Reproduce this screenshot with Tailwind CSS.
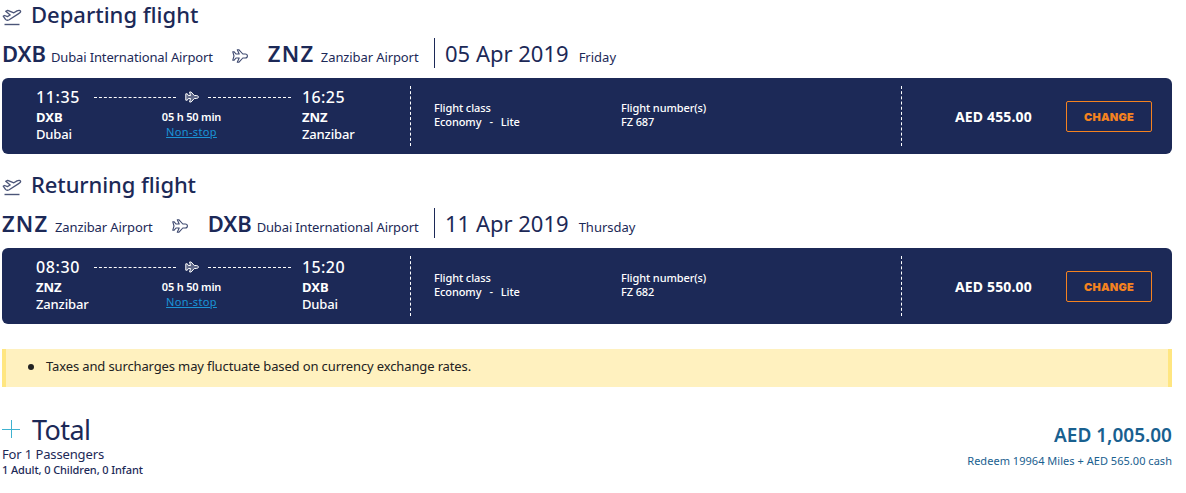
<!DOCTYPE html>
<html lang="en">
<head>
    <meta charset="UTF-8" />
    <meta name="viewport" content="width=device-width, initial-scale=1.0" />
    <title>Your flights</title>

    <script src="https://cdn.jsdelivr.net/npm/@tailwindcss/browser@4"></script>

    <style>
        body {
            font-family: 'Noto Sans', sans-serif;
        }
    </style>
</head>
<body class="bg-white text-[#1c2957]">

<!-- Shared icons -->
<svg class="hidden">
    <symbol id="plane" viewBox="0 0 16 14">
        <path d="M.8 2.800h1.400L4 5h3.200L5.300.7h1.500L10.800 5h2.400c1.300 0 2.200 1 2.200 2s-.9 2-2.200 2h-2.400l-4 4.300H5.300L7.200 9H4l-1.800 2.200H.8L2 7z" fill="none" stroke="currentColor" stroke-width="1.100" stroke-linejoin="round" />
    </symbol>
    <symbol id="jet" viewBox="0 0 14 12">
        <path d="M.8 2.800h1.500l1 1.700h2.200L4.600 1h1.500l3.200 3.500h2.200c1 0 1.900.7 1.900 1.500s-.9 1.500-1.900 1.500H9.300L6.100 11H4.600l.9-3.500H3.300l-1 1.700H.8z" fill="currentColor" fill-opacity=".3" stroke="currentColor" stroke-linejoin="round" />
    </symbol>
    <symbol id="takeoff" viewBox="0 0 20 18">
        <path d="M1.200 8.200l1.500-.7 2.700 1.100 2.800-1.600L3.700 3.300l2-1 6.200 2.500 3.100-1.900c1.500-.9 3.100-.7 3.500.1.400.8-.4 1.800-1.800 2.600L7.200 11.700c-1.500.8-2.800.8-3.700-.3z" fill="none" stroke="currentColor" stroke-width="1.300" stroke-linejoin="round" />
        <path d="M2.500 16.500h15" stroke="currentColor" stroke-width="1.400" />
    </symbol>
</svg>

<main class="ml-0.5 w-[1170px]">

    <!-- Departing flight -->
    <section>
        <h2 class="flex h-[29px] text-[22px] leading-[29px] font-medium">
            <svg class="mt-2 mr-[9px] h-[18px] w-5 text-[#4b5578]"><use href="#takeoff" /></svg>
            <span>Departing flight</span>
        </h2>
        <div class="mt-[9px] flex h-[30px] items-baseline text-[22px] leading-[30px]">
            <div class="flex w-[432px] items-baseline">
                <span class="w-[49px] font-semibold tracking-[-0.1px]">DXB</span>
                <span class="text-[13px] tracking-[-0.14px]">Dubai International Airport</span>
                <svg class="mt-0.5 ml-[19px] h-3.5 w-4 self-center text-[#3d486f]"><use href="#plane" /></svg>
                <span class="ml-5 w-[53px] font-semibold tracking-[1.2px]">ZNZ</span>
                <span class="text-[13px] tracking-[-0.1px]">Zanzibar Airport</span>
            </div>
            <div class="flex h-[30px] items-baseline border-l border-[#1c2957] pl-2.5">
                <span>05 Apr 2019</span>
                <span class="ml-2.5 text-[13px]">Friday</span>
            </div>
        </div>
        <div class="mt-2.5 flex h-[76px] rounded-md bg-[#1c2957] pl-[34px] text-white">
            <div class="w-[58px] pt-2.5 text-[13px] leading-[17px] font-medium">
                <p class="mb-[3px] text-base leading-[18px] tracking-[0.6px]">11:35</p>
                <p class="font-bold">DXB</p>
                <p class="tracking-[-0.15px]">Dubai</p>
            </div>
            <div class="w-[208px] pt-[13px] text-center">
                <div class="flex h-3 items-center">
                    <span class="w-[82px] border-t border-dashed border-white"></span>
                    <svg class="mx-[9px] h-3 w-3.5"><use href="#jet" /></svg>
                    <span class="w-[83px] border-t border-dashed border-white"></span>
                </div>
                <div class="w-[195px]">
                    <p class="mt-[7px] text-[11px] leading-[14px] font-semibold tracking-[-0.2px]">05 h 50 min</p>
                    <a href="#" class="block text-[11px] leading-[15px] tracking-[0.35px] text-[#1a94d6] underline">Non-stop</a>
                </div>
            </div>
            <div class="w-[108px] pt-2.5 text-[13px] leading-[17px] font-medium">
                <p class="mb-[3px] text-base leading-[18px] tracking-[0.4px]">16:25</p>
                <p class="font-bold">ZNZ</p>
                <p class="tracking-[-0.15px]">Zanzibar</p>
            </div>
            <div class="my-2 w-[492px] border-x border-dashed border-white pt-[15px] pl-[23px] text-[11px] leading-[14px] font-medium tracking-[-0.1px]">
                <div class="grid grid-cols-[187px_1fr]">
                    <div>
                        <p>Flight class</p>
                        <p>Economy<span class="mx-2">-</span>Lite</p>
                    </div>
                    <div>
                        <p>Flight number(s)</p>
                        <p>FZ 687</p>
                    </div>
                </div>
            </div>
            <div class="flex flex-1 items-center justify-between pr-5 pl-[53px]">
                <span class="pt-0.5 text-sm font-bold tracking-[0.15px]">AED 455.00</span>
                <button class="h-[31px] w-[86px] rounded-xs border border-[#f58220] pt-0.5 font-[Inter] text-[11px] font-black tracking-[0.2px] text-[#f58220]">CHANGE</button>
            </div>
        </div>
    </section>

    <!-- Returning flight -->
    <section class="mt-4">
        <h2 class="flex h-[29px] text-[22px] leading-[29px] font-medium">
            <svg class="mt-2 mr-[9px] h-[18px] w-5 text-[#4b5578]"><use href="#takeoff" /></svg>
            <span class="tracking-[-0.1px]">Returning flight</span>
        </h2>
        <div class="mt-[9px] flex h-[30px] items-baseline text-[22px] leading-[30px]">
            <div class="flex w-[432px] items-baseline">
                <span class="w-[53px] font-semibold tracking-[1.2px]">ZNZ</span>
                <span class="text-[13px] tracking-[-0.1px]">Zanzibar Airport</span>
                <svg class="mt-0.5 ml-[19px] h-3.5 w-4 self-center text-[#3d486f]"><use href="#plane" /></svg>
                <span class="ml-5 w-[49px] font-semibold tracking-[-0.1px]">DXB</span>
                <span class="text-[13px] tracking-[-0.14px]">Dubai International Airport</span>
            </div>
            <div class="flex h-[30px] items-baseline border-l border-[#1c2957] pl-2.5">
                <span>11 Apr 2019</span>
                <span class="ml-2.5 text-[13px]">Thursday</span>
            </div>
        </div>
        <div class="mt-2.5 flex h-[76px] rounded-md bg-[#1c2957] pl-[34px] text-white">
            <div class="w-[58px] pt-2.5 text-[13px] leading-[17px] font-medium">
                <p class="mb-[3px] text-base leading-[18px] tracking-[0.6px]">08:30</p>
                <p class="font-bold">ZNZ</p>
                <p class="tracking-[-0.15px]">Zanzibar</p>
            </div>
            <div class="w-[208px] pt-[13px] text-center">
                <div class="flex h-3 items-center">
                    <span class="w-[82px] border-t border-dashed border-white"></span>
                    <svg class="mx-[9px] h-3 w-3.5"><use href="#jet" /></svg>
                    <span class="w-[83px] border-t border-dashed border-white"></span>
                </div>
                <div class="w-[195px]">
                    <p class="mt-[7px] text-[11px] leading-[14px] font-semibold tracking-[-0.2px]">05 h 50 min</p>
                    <a href="#" class="block text-[11px] leading-[15px] tracking-[0.35px] text-[#1a94d6] underline">Non-stop</a>
                </div>
            </div>
            <div class="w-[108px] pt-2.5 text-[13px] leading-[17px] font-medium">
                <p class="mb-[3px] text-base leading-[18px] tracking-[0.4px]">15:20</p>
                <p class="font-bold">DXB</p>
                <p class="tracking-[-0.15px]">Dubai</p>
            </div>
            <div class="my-2 w-[492px] border-x border-dashed border-white pt-[15px] pl-[23px] text-[11px] leading-[14px] font-medium tracking-[-0.1px]">
                <div class="grid grid-cols-[187px_1fr]">
                    <div>
                        <p>Flight class</p>
                        <p>Economy<span class="mx-2">-</span>Lite</p>
                    </div>
                    <div>
                        <p>Flight number(s)</p>
                        <p>FZ 682</p>
                    </div>
                </div>
            </div>
            <div class="flex flex-1 items-center justify-between pr-5 pl-[53px]">
                <span class="pt-0.5 text-sm font-bold tracking-[0.15px]">AED 550.00</span>
                <button class="h-[31px] w-[86px] rounded-xs border border-[#f58220] pt-0.5 font-[Inter] text-[11px] font-black tracking-[0.2px] text-[#f58220]">CHANGE</button>
            </div>
        </div>
    </section>

    <!-- Notice -->
    <ul class="mt-[25px] flex h-[38px] items-center border-x-4 border-[#ffe681] bg-[#fff1bf] pb-[3px] pl-[22px] text-[13px] tracking-[-0.13px] text-[#222]">
        <li class="flex items-center gap-3">
            <span class="size-1.5 rounded-full bg-[#222]"></span>
            Taxes and surcharges may fluctuate based on currency exchange rates.
        </li>
    </ul>

    <!-- Total -->
    <section class="mt-[25px] flex justify-between">
        <div>
            <h2 class="flex h-[34px] text-[27px] leading-[36px]">
                <svg class="mt-2 mr-3 h-[18px] w-[18px]" viewBox="0 0 18 18" stroke="#3fb2d0"><path d="M0 9.500h18M9.500 0v18" /></svg>
                <span class="tracking-[-0.6px]">Total</span>
            </h2>
            <p class="text-[13px] leading-[17px] tracking-[-0.13px]">For 1 Passengers</p>
            <p class="text-[11px] leading-[14px] font-medium tracking-[-0.1px]">1 Adult, 0 Children, 0 Infant</p>
        </div>
        <div class="pt-2.5 text-right text-[#19608f]">
            <p class="text-[19px] leading-[26px] font-semibold">AED 1,005.00</p>
            <p class="mt-[5px] text-[11px] leading-[16px] tracking-[0.03px]">Redeem 19964 Miles + AED 565.00 cash</p>
        </div>
    </section>

</main>

</body>
</html>
